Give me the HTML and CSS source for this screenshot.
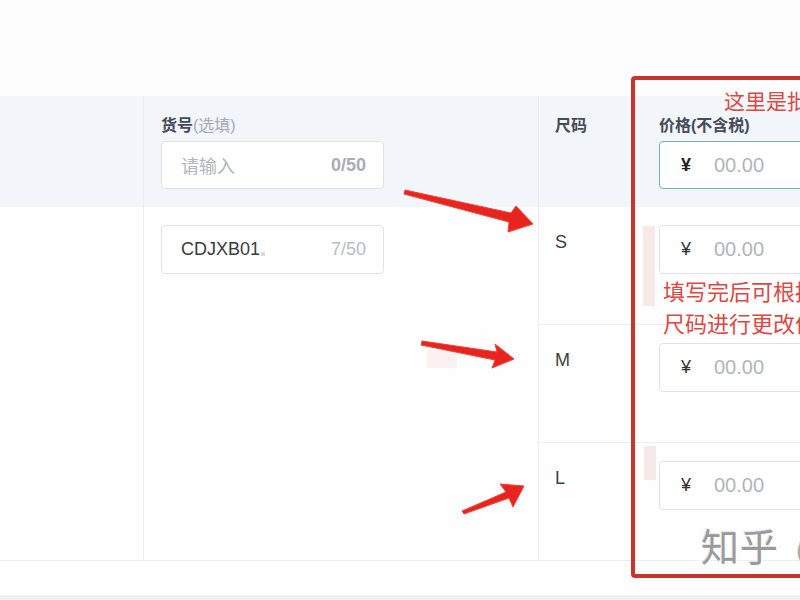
FILE: index.html
```html
<!DOCTYPE html>
<html lang="zh">
<head>
<meta charset="utf-8">
<title>价格填写</title>
<link rel="stylesheet" href="styles.css">
</head>
<body>
<div class="page">
  <div class="topband"></div>
  <div class="table">
    <div class="cell head c1"></div>
    <div class="cell head c2">
      <div class="label">货号<span class="opt">(选填)</span></div>
      <div class="input"><span class="ph">请输入</span><span class="count strong">0/50</span></div>
    </div>
    <div class="cell head c3"><div class="label">尺码</div></div>
    <div class="cell head c4">
      <div class="label">价格(不含税)</div>
      <div class="input price focus"><span class="yen bold">¥</span><span class="ph num">00.00</span></div>
    </div>

    <div class="cell c1 span3"></div>
    <div class="cell c2 span3">
      <div class="input"><span class="val">CDJXB01<span class="dot"></span></span><span class="count">7/50</span></div>
    </div>
    <div class="cell c3 size line">S</div>
    <div class="cell c4 line">
      <div class="input price"><span class="yen">¥</span><span class="ph num">00.00</span></div>
    </div>
    <div class="cell c3 size line">M</div>
    <div class="cell c4 line">
      <div class="input price"><span class="yen">¥</span><span class="ph num">00.00</span></div>
    </div>
    <div class="cell c3 size">L</div>
    <div class="cell c4">
      <div class="input price"><span class="yen">¥</span><span class="ph num">00.00</span></div>
    </div>
  </div>
  <div class="foot"></div>
  <div class="footbar"></div>

  <div class="blur b1"></div>
  <div class="blur b2"></div>
  <div class="blur b3"></div>

  <div class="redbox"></div>
  <div class="note note-top">这里是批</div>
  <div class="note note-mid">填写完后可根据<br>尺码进行更改价</div>
  <div class="watermark">知乎<span class="wm-at">@</span></div>

  <svg class="arrows" width="800" height="600" viewBox="0 0 800 600">
    <polygon points="405,190 511,213 516,206 533,224 508,232 509,222 404,194" />
    <polygon points="422,341 497,352 495,344 514,359 492,368 495,360 421,345" />
    <polygon points="462,511 506,492 500,484 524,486 513,507 509,498 464,514" />
  </svg>
</div>
</body>
</html>
```
FILE: styles.css
```css
html, body {
  margin: 0;
  padding: 0;
  background: #ffffff;
}
body {
  font-family: "Liberation Sans", "Noto Sans CJK SC", sans-serif;
  color: #333;
}
.page {
  position: relative;
  width: 800px;
  height: 600px;
  overflow: hidden;
  background: #fefefe;
}
.topband {
  height: 96px;
  background: #fdfdfd;
}
.table {
  display: grid;
  grid-template-columns: 143px 395px 93px 420px;
  grid-template-rows: 111px 118px 118px 117px;
  border-bottom: 1px solid #eceef1;
}
.cell {
  box-sizing: border-box;
  background: #fefefe;
}
.cell.head {
  background: #f2f5f9;
  padding-top: 20px;
}
.span3 {
  grid-row: span 3;
}
.c2 {
  border-left: 1px solid #eaedf1;
  padding-left: 17px;
  padding-top: 18px;
}
.c3 {
  border-left: 1px solid #eaedf1;
  padding-left: 16px;
}
.c4 {
  border-left: 1px solid #eaedf1;
  padding-left: 27px;
  padding-top: 18px;
}
.cell.head.c2, .cell.head.c4 {
  padding-top: 20px;
}
.line {
  border-bottom: 1px solid #eceef1;
}
.label {
  font-size: 16px;
  line-height: 20px;
  font-weight: bold;
  color: #454b59;
}
.opt {
  font-weight: normal;
  color: #a3aabb;
}
.input {
  box-sizing: border-box;
  width: 223px;
  height: 49px;
  border: 1px solid #dfe2e8;
  border-radius: 4px;
  background: #fff;
  display: flex;
  align-items: center;
  justify-content: space-between;
  padding: 0 17px 0 19px;
  font-size: 18px;
}
.head .input {
  margin-top: 5px;
  height: 48px;
}
.ph {
  color: #b2b5bb;
}
.count {
  color: #b9bcc2;
}
.count.strong {
  font-weight: bold;
  color: #a9adb5;
}
.val {
  color: #3b3b3b;
  display: flex;
  align-items: flex-end;
}
.dot {
  display: inline-block;
  width: 4px;
  height: 4px;
  background: #ddd;
  margin: 0 0 4px 1px;
}
.price {
  width: 220px;
  justify-content: flex-start;
  padding-left: 21px;
}
.price.focus {
  border-color: #78b4ad;
}
.yen {
  font-size: 18px;
  color: #333;
  width: 33px;
}
.yen.bold {
  font-weight: bold;
  color: #222;
}
.num {
  font-size: 20px;
}
.size {
  padding-top: 23px;
  font-size: 18px;
  line-height: 24px;
  color: #3f3f3f;
}
.foot {
  height: 34px;
  background: #fefefe;
}
.footbar {
  height: 10px;
  background: #eff0f2;
}
.blur {
  position: absolute;
  background: #f6e3e3;
  opacity: 0.8;
}
.b1 { left: 643px; top: 226px; width: 12px; height: 80px; }
.b2 { left: 644px; top: 446px; width: 12px; height: 34px; }
.b3 { left: 427px; top: 350px; width: 30px; height: 18px; background: #faeeee; }
.redbox {
  position: absolute;
  left: 631px;
  top: 76px;
  width: 220px;
  height: 502px;
  box-sizing: border-box;
  border: 4px solid #c93430;
  border-radius: 4px;
}
.note {
  position: absolute;
  font-family: "Noto Sans CJK SC", sans-serif;
  color: #d94a45;
  white-space: nowrap;
}
.note-top {
  left: 724px;
  top: 86px;
  font-size: 21px;
  line-height: 28px;
}
.note-mid {
  left: 663px;
  top: 274px;
  font-size: 22px;
  line-height: 32px;
}
.watermark {
  position: absolute;
  left: 701px;
  top: 520px;
  font-family: "Noto Sans CJK SC", sans-serif;
  font-size: 38px;
  line-height: 50px;
  color: #9a9a9a;
  letter-spacing: 1px;
  white-space: nowrap;
  text-shadow: 1px 1px 0 #ffffff, -1px -1px 0 #e6e6e6;
}
.wm-at {
  margin-left: 17px;
  color: #a8a8a8;
}
.arrows {
  position: absolute;
  left: 0;
  top: 0;
}
.arrows polygon {
  fill: #e8241f;
  stroke: #f0403a;
  stroke-width: 1;
  stroke-linejoin: round;
}
```
